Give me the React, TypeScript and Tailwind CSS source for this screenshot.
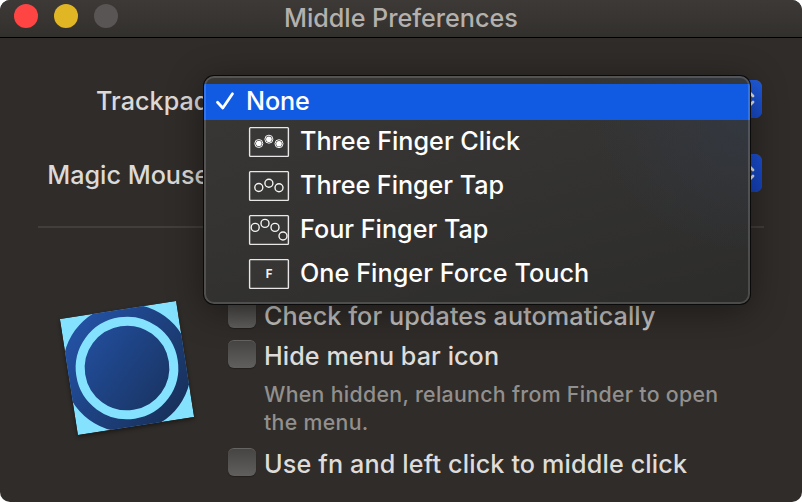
import type { ReactNode } from "react";

type Dot = [number, number];

function TrackpadGlyph({ dots, filled, children }: { dots?: Dot[]; filled?: boolean; children?: ReactNode }) {
  return (
    <svg width="42" height="32" viewBox="0 0 42 32" className="shrink-0">
      <rect x="1.6" y="1.6" width="38.8" height="28.8" rx="0.8" fill="#ffffff" fillOpacity="0.02" stroke="#e8e6e7" strokeWidth="1.4" />
      {(dots ?? []).map(([x, y]) => (
        <g key={x}>
          <circle cx={x} cy={y} r="4" fill="none" stroke="#f4f4f4" strokeWidth={filled ? 1 : 1.4} />
          {filled && <circle cx={x} cy={y} r="2.8" fill="#ffffff" />}
        </g>
      ))}
      {children}
    </svg>
  );
}

function MenuItem({ label, spacing, icon }: { label: string; spacing: string; icon: ReactNode }) {
  return (
    <li className="flex h-11 items-center pl-11">
      {icon}
      <span className={`ml-[10px] pb-0.5 text-[25.2px] leading-8 font-medium text-white ${spacing}`}>{label}</span>
    </li>
  );
}

function SelectRow({ label, tone }: { label: string; tone: string }) {
  return (
    <div className="flex h-[38px] items-center">
      <div className="w-[217px] pt-1 text-right text-[25.2px] leading-8 font-[450] text-[#dcdad8]">{label}</div>
      <div className="ml-1.5 flex h-[38px] w-[539px] justify-end overflow-hidden rounded-[7px] bg-[#5d5a58]">
        <div className={`flex w-8 items-center justify-center bg-linear-to-b ${tone}`}>
          <svg width="16" height="20" viewBox="0 0 16 20" fill="none" stroke="#dfe5f2" strokeWidth="2.8" strokeLinecap="round" strokeLinejoin="round" className="ml-1">
            <path d="M3 7 8 2l5 5M3 13l5 5 5-5" />
          </svg>
        </div>
      </div>
    </div>
  );
}

function CheckRow({ label, spacing, tone }: { label: string; spacing: string; tone: string }) {
  return (
    <label className="flex h-7 items-center">
      <span className="size-7 shrink-0 rounded-[6px] border-t border-[#666462] bg-linear-to-b from-[#474543] to-[#615f5d] shadow-[0_1px_1px_rgba(0,0,0,0.3)]" />
      <span className={`ml-2 pt-1 text-[25.2px] leading-8 font-[450] whitespace-nowrap ${tone} ${spacing}`}>{label}</span>
    </label>
  );
}

export default function App() {
  return (
    <div className="h-[502px] w-[802px] overflow-hidden bg-white font-['Inter','Liberation_Sans',sans-serif]">
      <div className="relative flex h-full flex-col overflow-hidden rounded-[10px] bg-[#302c29]">
        <header className="flex h-[38px] shrink-0 items-center border-b border-black bg-linear-to-b from-[#3d3937] to-[#32302d] pb-[5px] pl-[14px]">
          <div className="flex w-[104px] gap-4">
            <span className="size-6 rounded-full bg-[#ff4444]" />
            <span className="size-6 rounded-full bg-[#e0b625]" />
            <span className="size-6 rounded-full bg-[#595554]" />
          </div>
          <h1 className="ml-[166px] pt-[3px] text-[25.2px] leading-8 font-[450] tracking-[-0.03px] whitespace-nowrap text-[#b4b0ad]">Middle Preferences</h1>
        </header>

        <section className="flex flex-col gap-9 pt-[42px]">
          <SelectRow label="Trackpad:" tone="from-[#205ce0] to-[#174bca]" />
          <SelectRow label="Magic Mouse:" tone="from-[#1a50d6] to-[#1442ba]" />
        </section>

        <div className="mx-[38px] mt-[34px] h-0.5 shrink-0 bg-[#413e3b]" />

        <section className="flex pt-[72px] pl-[58px]">
          <svg width="150" height="150" viewBox="-69 -69 150 150" className="-mt-px w-[150px] shrink-0 drop-shadow-[0_2px_2px_rgba(0,0,0,0.45)]">
            <defs>
              <linearGradient id="disc" x1="0" y1="0.1" x2="0.9" y2="1">
                <stop offset="0.1" stopColor="#2351a3" />
                <stop offset="0.9" stopColor="#18315c" />
              </linearGradient>
              <clipPath id="tile">
                <rect x="-58.8" y="-58.8" width="117.6" height="117.6" />
              </clipPath>
            </defs>
            <g transform="rotate(-8.8)" clipPath="url(#tile)">
              <rect x="-58.8" y="-58.8" width="117.6" height="117.6" fill="#84e2ff" />
              <circle r="64.2" fill="url(#disc)" />
              <circle r="46.8" fill="none" stroke="#84e2ff" strokeWidth="9" />
            </g>
          </svg>
          <div className="ml-5 flex flex-col">
            <CheckRow label="Check for updates automatically" spacing="tracking-[0.07px]" tone="text-[#c4c2c0]" />
            <div className="h-3" />
            <CheckRow label="Hide menu bar icon" spacing="tracking-[0.05px]" tone="text-[#dedcda]" />
            <p className="mt-3 ml-9 text-[21.3px] leading-7 font-[450] whitespace-nowrap text-[#92908e]">
              <span className="tracking-[0.31px]">When hidden, relaunch from Finder to open</span>
              <br />
              <span className="tracking-[0.31px]">the menu.</span>
            </p>
            <div className="h-3" />
            <CheckRow label="Use fn and left click to middle click" spacing="tracking-[0.13px]" tone="text-[#dedcda]" />
          </div>
        </section>

        {/* Open pop-up menu floating over the form */}
        <ul className="absolute top-[76px] left-[204px] h-[228px] w-[546px] overflow-hidden rounded-[10px] bg-[radial-gradient(ellipse_160px_150px_at_100%_12%,#333841_0%,rgba(51,56,65,0)_100%),linear-gradient(165deg,#383735_0%,#343332_45%,#2c2c2b_100%)] pt-2 shadow-[0_0_0_1px_#0b0a0a,0_6px_36px_rgba(0,0,0,0.45)]">
          <li className="flex h-9 items-center bg-[#115be2] pl-[11px] text-white">
            <svg width="20" height="20" viewBox="0 0 20 20" fill="none" stroke="currentColor" strokeWidth="2.8" strokeLinecap="round" strokeLinejoin="round" className="mb-0.5">
              <path d="M2.5 11.2 7.8 17 17.5 2.8" />
            </svg>
            <span className="ml-[11px] pb-0.5 text-[25.2px] leading-8 font-medium tracking-[-0.1px]">None</span>
          </li>
          <MenuItem label="Three Finger Click" spacing="" icon={<TrackpadGlyph filled dots={[[10.8, 17.5], [20.9, 13.2], [31, 17.7]]} />} />
          <MenuItem label="Three Finger Tap" spacing="tracking-[-0.05px]" icon={<TrackpadGlyph dots={[[10.8, 17.5], [20.9, 13.2], [31, 17.7]]} />} />
          <MenuItem label="Four Finger Tap" spacing="" icon={<TrackpadGlyph dots={[[7.2, 13.4], [17, 9.4], [27, 13.4], [35, 22]]} />} />
          <MenuItem
            label="One Finger Force Touch"
            spacing="tracking-[0.05px]"
            icon={
              <TrackpadGlyph>
                <text x="21.2" y="20" textAnchor="middle" fontSize="11.5" fontWeight="700" fill="#f4f4f4">F</text>
              </TrackpadGlyph>
            }
          />
          <li aria-hidden="true" className="pointer-events-none absolute inset-0 rounded-[10px] border-2 border-white/15" />
        </ul>
      </div>
    </div>
  );
}
